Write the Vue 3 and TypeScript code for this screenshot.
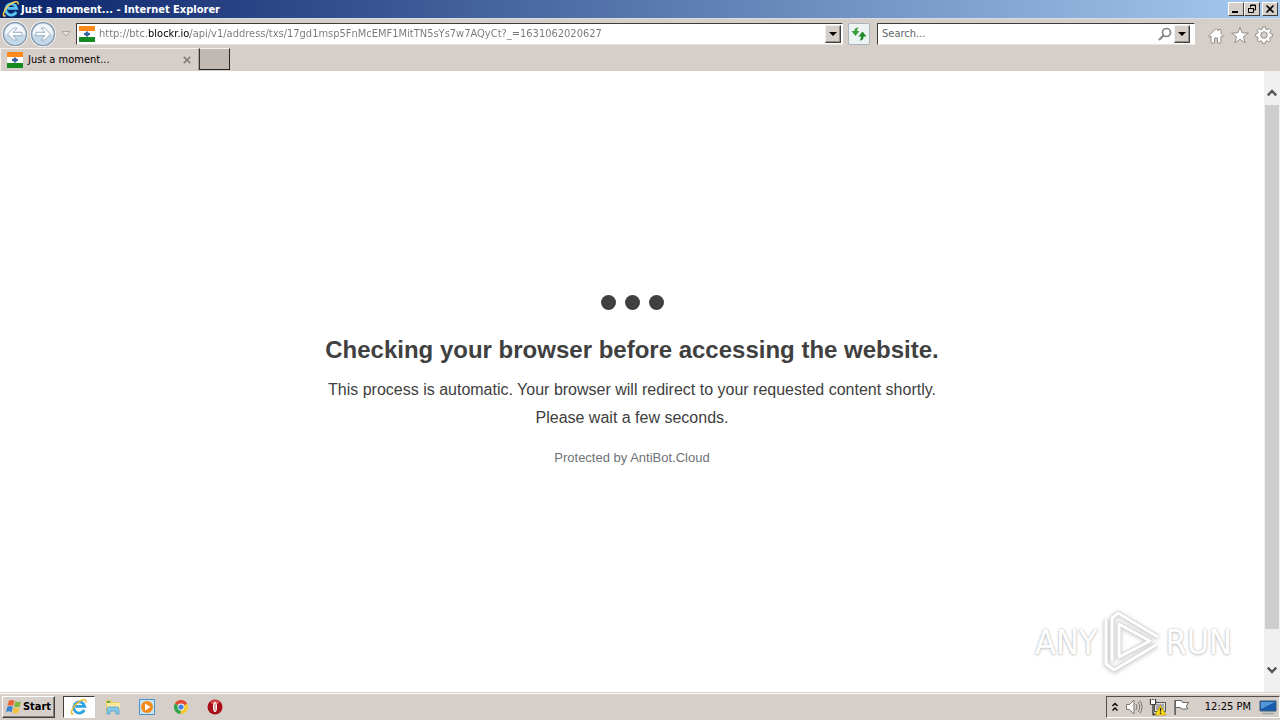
<script setup lang="ts">
import { ref } from 'vue'

const address = ref('http://btc.blockr.io/api/v1/address/txs/17gd1msp5FnMcEMF1MitTN5sYs7w7AQyCt?_=1631062020627')
const query = ref('')
</script>

<template>
  <div class="desktop">
    <header class="titlebar">
      <svg class="ie" viewBox="0 0 18 18" aria-hidden="true">
        <path d="M14.3 12a5.6 5.6 0 1 1 .5-3.6H5.5" fill="none" stroke="#5cc4f4" stroke-width="2.8" />
        <path d="M3.500 15.500C-.5 18 1.500 9.500 7 5.200 11.500 1.500 17 .2 16 4.500" fill="none" stroke="#f6d04e" stroke-width="1.500" />
      </svg>
      <span class="title">Just a moment... - Internet Explorer</span>
      <div class="winbtns">
        <button class="winbtn" aria-label="Minimize"><svg viewBox="0 0 12 10"><path d="M2 8h6" stroke="#000" stroke-width="2" /></svg></button>
        <button class="winbtn" aria-label="Restore"><svg viewBox="0 0 12 10"><path d="M4.500 3.500V1h5v5H8M4 1.500h6M2.500 4.500h5v4h-5zM2 4.500h6" fill="none" stroke="#000" /></svg></button>
        <button class="winbtn close" aria-label="Close"><svg viewBox="0 0 12 10"><path d="M2.500 1.500l7 7M9.500 1.500l-7 7" stroke="#000" stroke-width="1.600" /></svg></button>
      </div>
    </header>

    <nav class="navbar">
      <div class="history">
        <button class="round" aria-label="Back">
          <svg viewBox="0 0 26 26">
            <circle cx="13" cy="13" r="11.500" fill="#dce6ef" stroke="#8799ad" stroke-width="1.500" />
            <path d="M3 13a10 10 0 0 1 20 0z" fill="#f3f6fa" />
            <path d="M3 14a10 10 0 0 0 20 0z" fill="#c3d9ea" />
            <path d="M5.500 13l6-6h3.500l-4 4.300h9v3.400h-9l4 4.300h-3.500z" fill="#fff" stroke="#91a7bd" stroke-width=".9" />
          </svg>
        </button>
        <button class="round" aria-label="Forward">
          <svg viewBox="0 0 26 26">
            <circle cx="13" cy="13" r="11.500" fill="#dce6ef" stroke="#8799ad" stroke-width="1.500" />
            <path d="M3 13a10 10 0 0 1 20 0z" fill="#f3f6fa" />
            <path d="M3 14a10 10 0 0 0 20 0z" fill="#c3d9ea" />
            <path d="M20.500 13l-6-6H11l4 4.300H6v3.400h9L11 19h3.500z" fill="#fff" stroke="#91a7bd" stroke-width=".9" />
          </svg>
        </button>
      </div>
      <button class="plain recent" aria-label="Recent pages"><svg viewBox="0 0 10 6"><path d="M1 .5h8L5 5z" fill="#e8e5e0" stroke="#aaa6a0" /></svg></button>
      <div class="field address">
        <svg class="flag" viewBox="0 0 16 16" aria-hidden="true"><path fill="#ff8a1c" d="M0 0h16v5H0z" /><path fill="#fff" d="M0 5h16v6H0z" /><path fill="#168a20" d="M0 11h16v5H0z" /><path fill="#3d62a0" d="M8 5l3 3-3 3-3-3zM5 7h6v2H5z" /></svg>
        <input v-model="address" class="url" type="text" aria-label="Address" spellcheck="false">
        <button class="drop" aria-label="Show address list"><svg viewBox="0 0 8 4"><path d="M0 0h8L4 4z" /></svg></button>
      </div>
      <button class="refresh" aria-label="Refresh">
        <svg viewBox="0 0 16 16"><path d="M7.500 1.500Q3 1.500 3.500 5H.5l4 5 4-5H6Q5.800 3 7.500 1.500z" fill="#36a038" /><path d="M8.500 14.500q4.500 0 4-4h3l-4-5-4 5H10q.2 2.500-1.500 4z" fill="#208a28" /></svg>
      </button>
      <div class="field search">
        <input v-model="query" type="text" placeholder="Search..." aria-label="Search">
        <button class="plain glass" aria-label="Search the web"><svg viewBox="0 0 14 14"><circle cx="8.500" cy="5.500" r="4" fill="none" stroke="#858585" stroke-width="1.700" /><path d="M5.500 8.500L1 13" stroke="#858585" stroke-width="2.200" /></svg></button>
        <button class="drop" aria-label="Search options"><svg viewBox="0 0 8 4"><path d="M0 0h8L4 4z" /></svg></button>
      </div>
      <div class="tools">
        <button class="plain tool" aria-label="Home"><svg viewBox="0 0 18 18"><path d="M1.500 10L9 2.500l2.500 2.500V3.500h2.500v4l2.500 2.500-1 1-1.500-1v7h-3.500v-5h-3v5H4v-7l-1.500 1z" /></svg></button>
        <button class="plain tool" aria-label="Favorites"><svg viewBox="0 0 18 18"><path d="M9 1l2.100 5.800 6.200.2-4.900 3.800 1.800 6L9 13.300l-5.200 3.500 1.800-6L.7 7l6.200-.2z" /></svg></button>
        <button class="plain tool" aria-label="Tools"><svg viewBox="0 0 18 18"><path fill-rule="evenodd" d="M7.500 1h3l.4 2.200 1.300.6L14 2.400 16 4.500l-1.300 1.900.5 1.200 2.100.3v2.900l-2.100.4-.6 1.300L15.800 14l-2 2-1.800-1.200-1.300.5-.4 2h-3l-.4-2-1.200-.5L4 16l-2-2 1.200-1.600-.5-1.300L.7 10.700v-3l2-.4.6-1.200L2 4.500l2-2 1.800 1.300 1.300-.6zM9 5.700a3.300 3.300 0 1 0 0 6.600 3.300 3.300 0 0 0 0-6.600z" /></svg></button>
      </div>
    </nav>

    <div class="tabs">
      <div class="tab">
        <svg class="flag" viewBox="0 0 16 16" aria-hidden="true"><path fill="#ff8a1c" d="M0 0h16v5H0z" /><path fill="#fff" d="M0 5h16v6H0z" /><path fill="#168a20" d="M0 11h16v5H0z" /><path fill="#3d62a0" d="M8 5l3 3-3 3-3-3zM5 7h6v2H5z" /></svg>
        <span class="tabname">Just a moment...</span>
        <button class="plain tabclose" aria-label="Close tab"><svg viewBox="0 0 8 8"><path d="M.8.8l6.400 6.400M7.200.8L.8 7.200" stroke="#85817d" stroke-width="1.800" /></svg></button>
      </div>
      <button class="newtab" aria-label="New tab"></button>
    </div>

    <div class="viewport">
      <main class="page">
        <div class="dots"><i></i><i></i><i></i></div>
        <h1>Checking your browser before accessing the website.</h1>
        <p>This process is automatic. Your browser will redirect to your requested content shortly.</p>
        <p>Please wait a few seconds.</p>
        <small>Protected by <a href="#">AntiBot.Cloud</a></small>
      </main>
      <div class="scroll">
        <button class="plain arrow" aria-label="Scroll up"><svg viewBox="0 0 10 8"><path d="M.8 6.500L5 2l4.200 4.500" fill="none" stroke="#555" stroke-width="2.400" /></svg></button>
        <div class="track"><div class="thumb"></div></div>
        <button class="plain arrow" aria-label="Scroll down"><svg viewBox="0 0 10 8"><path d="M.8 1.500L5 6l4.200-4.500" fill="none" stroke="#555" stroke-width="2.400" /></svg></button>
      </div>
      <div class="watermark">
        <span>ANY</span>
        <svg viewBox="0 0 60 64" aria-hidden="true">
          <g fill="none" stroke="#d4d4d4" stroke-width="4.500" stroke-linejoin="round">
            <path d="M18 14v33l31-16z" /><path d="M11 51V8l6-5 40 24" /><path d="M5 9v45l8 6 42-25" />
          </g>
          <g fill="none" stroke="#fff" stroke-width="3" stroke-linejoin="round">
            <path d="M18 14v33l31-16z" /><path d="M11 51V8l6-5 40 24" /><path d="M5 9v45l8 6 42-25" />
          </g>
        </svg>
        <span>RUN</span>
      </div>
    </div>

    <footer class="taskbar">
      <button class="start">
        <svg viewBox="0 0 18 18" aria-hidden="true"><path d="M3 3q3-2 6 0L7.500 8.500q-3-1.800-6 0z" fill="#ed6438" /><path d="M10 3.500q3 1.500 6 0L14.500 9q-3 1.500-6 0z" fill="#82b840" /><path d="M1.300 9.500q3-1.800 6 0L5.800 15q-3-1.800-6 0z" fill="#3b83d0" /><path d="M8.300 10q3 1.500 6 0l-1.500 5.500q-3 1.500-6 0z" fill="#f5c23d" /></svg>
        <span>Start</span>
      </button>
      <div class="launch">
        <button class="task active" aria-label="Internet Explorer"><svg viewBox="0 0 18 18"><path d="M14.300 12a5.600 5.600 0 1 1 .5-3.600H5.500" fill="none" stroke="#2fa3df" stroke-width="2.800" /><path d="M3.500 15.500C-.5 18 1.500 9.500 7 5.200 11.500 1.500 17 .2 16 4.500" fill="none" stroke="#eebd35" stroke-width="1.500" /></svg></button>
        <button class="task" aria-label="Windows Explorer"><svg viewBox="0 0 18 18"><path d="M2 2h5l1 2h7v9H2z" fill="#e9c95b" /><path d="M3 3h3v2H3z" fill="#58a650" /><path d="M3 5h13v7H3z" fill="#f9e99e" /><path d="M3 16v-5q0-2 2-2h8q2 0 2 2v5h-3v-3H6v3z" fill="#83c7e9" stroke="#4b9bc7" stroke-width=".7" /></svg></button>
        <button class="task" aria-label="Media Player"><svg viewBox="0 0 18 18"><path d="M1.500 1.500h15v15h-15z" fill="#c9e4f6" stroke="#4b91c9" /><circle cx="9" cy="9" r="6" fill="#f58a18" /><path d="M7 5.500v7L12.500 9z" fill="#fff" /></svg></button>
        <button class="task" aria-label="Chrome"><svg viewBox="0 0 18 18"><circle cx="9" cy="9" r="7" fill="#f4ca30" /><path d="M9 9L2.900 5.500a7 7 0 0 1 12.200 0z" fill="#e34737" /><path d="M9 9L2.900 5.500A7 7 0 0 0 8.500 16z" fill="#30a354" /><circle cx="9" cy="9" r="3.400" fill="#fff" /><circle cx="9" cy="9" r="2.600" fill="#427fe0" /></svg></button>
        <button class="task" aria-label="Opera"><svg viewBox="0 0 18 18"><circle cx="9" cy="9" r="7.500" fill="#a80f18" /><path d="M4 4a7.500 7.500 0 0 1 10 0l-2 2H6z" fill="#d44b4b" /><ellipse cx="9" cy="9" rx="2" ry="5" fill="#fff" /><path d="M9 5.500v7" stroke="#b06060" /></svg></button>
      </div>
      <div class="tray">
        <button class="plain more" aria-label="Show hidden icons"><svg viewBox="0 0 8 10"><path d="M1.500 4L4 1.500 6.500 4M1.500 8.500L4 6l2.500 2.500" fill="none" stroke="#000" stroke-width="1.400" /></svg></button>
        <button class="plain" aria-label="Volume"><svg viewBox="0 0 18 18"><path d="M1.500 6.500h3L9 2v14l-4.500-4.500h-3z" fill="#fff" stroke="#777" /><path d="M11 6q2 3 0 6M13 4q3.500 5 0 10M15 2.500q4 6.500 0 13" fill="none" stroke="#777" /></svg></button>
        <button class="plain" aria-label="Network"><svg viewBox="0 0 18 18"><path d="M5.500 4.500h11v9h-11z" fill="#ddd" stroke="#555" /><path d="M7 6h8v6H7z" fill="#aaa" /><path d="M1.500 1v5h5V1M4 1v3M4 6v10.500h4" fill="none" stroke="#333" stroke-width="1.300" /><path d="M2 2h4v4H2z" fill="#fff" /><path d="M11.500 7.500L17 17H6z" fill="#ffdc18" stroke="#b69500" stroke-width=".7" /><path d="M11.500 10v3.500M11.500 14.500V16" stroke="#222" stroke-width="1.300" /></svg></button>
        <button class="plain" aria-label="Action Center"><svg viewBox="0 0 18 18"><path d="M2.500 17V2.500h6l1 2h6l-2 3.500 1 3h-6l-1-1.500h-5" fill="#fff" stroke="#666" /><path d="M2 2v15" stroke="#666" stroke-width="1.500" /></svg></button>
        <time>12:25 PM</time>
        <button class="plain" aria-label="Show desktop"><svg viewBox="0 0 18 18"><path d="M1 3h16v10H1z" fill="#175cae" stroke="#385a7b" /><path d="M2 4h14L2 11z" fill="#5797db" /><path d="M3 15.500h12" stroke="#9aa" stroke-width="1.500" /></svg></button>
      </div>
    </footer>
  </div>
</template>

<style>
body { margin: 0; }
</style>

<style scoped>
* { box-sizing: border-box; }
.desktop { display: flex; flex-direction: column; height: 100vh; overflow: hidden; background: #d6cec8; color: #000; font-family: "DejaVu Sans Condensed", "DejaVu Sans", sans-serif; font-size: 11px; }
button, input { font: inherit; color: inherit; border-radius: 0; padding: 0; margin: 0; }
button { display: flex; align-items: center; justify-content: center; flex: none; }
svg { display: block; flex: none; }
.plain { border: 0; background: none; }
.flag { width: 16px; height: 16px; }

.titlebar { flex: none; display: flex; align-items: center; height: 18px; padding: 0 2px; background: linear-gradient(to right, #0a246a, #a6caf0); color: #fff; }
.ie { width: 18px; height: 18px; }
.title { flex: 1; margin-left: 1px; font-weight: bold; }
.winbtns { display: flex; }
.winbtn { width: 16px; height: 14px; border: 1px solid; border-color: #fff #404040 #404040 #fff; background: #d6cec8; }
.winbtn svg { width: 12px; height: 10px; }
.close { margin-left: 2px; }

.navbar { flex: none; display: flex; align-items: center; height: 30px; padding: 0 7px 0 2px; border-top: 1px solid #d4dce4; }
.history { display: flex; gap: 2px; }
.round { width: 26px; height: 26px; border: 0; border-radius: 50%; background: #fff; }
.round svg { width: 26px; height: 26px; }
.recent { width: 20px; height: 20px; }
.recent svg { width: 10px; height: 6px; }
.field { display: flex; align-items: center; height: 22px; padding: 1px; background: #fff; border: 1px solid; border-color: #403c38 #fff #e8e4e0 #403c38; }
.field input { flex: 1; min-width: 0; height: 18px; border: 0; outline: 0; background: none; }
.address { flex: 762 1 0; padding-left: 2px; gap: 4px; }
.address .url { background: linear-gradient(to right, #777 49px, #000 49px, #000 91px, #777 91px); background-clip: text; -webkit-background-clip: text; color: transparent; caret-color: #000; }
.drop { width: 16px; height: 18px; border: 1px solid; border-color: #eee #404040 #404040 #eee; box-shadow: inset -1px -1px #969088; background: #d6cec8; }
.drop svg { width: 8px; height: 4px; }
.refresh { width: 22px; height: 22px; margin: 0 7px 0 5px; border: 1px solid #aab4bc; border-radius: 2px; background: #edf3f3; }
.refresh svg { width: 16px; height: 16px; }
.search { flex: 308 1 0; padding: 1px 4px 1px 4px; }
.search input::placeholder { color: #666; opacity: 1; }
.glass { width: 18px; height: 18px; }
.glass svg { width: 14px; height: 14px; }
.tools { display: flex; gap: 6px; margin: 2px 0 0 12px; }
.tool svg { width: 18px; height: 18px; fill: #fff; stroke: #928e8a; stroke-width: 1; }

.tabs { flex: none; display: flex; height: 23px; }
.tab { display: flex; align-items: center; width: 199px; padding: 0 6px; gap: 5px; border: 1px solid; border-color: #f4f0ec #a8a098 transparent #f4f0ec; }
.tabname { flex: 1; }
.tabclose { width: 10px; height: 16px; }
.tabclose svg { width: 8px; height: 8px; }
.newtab { width: 31px; height: 22px; border: 1px solid; border-color: #f4f0ec #222 #222 #333; background: #bfb8b3; }

.viewport { position: relative; flex: 1; min-height: 0; display: flex; background: #fff; }
.page { flex: 1; display: flex; flex-direction: column; align-items: center; justify-content: center; font-family: "Liberation Sans", Arial, sans-serif; color: #404040; text-align: center; }
.dots { display: flex; gap: 9px; margin-bottom: 24px; }
.dots i { width: 15px; height: 15px; border-radius: 50%; background: #404040; }
h1 { margin: 0 0 10px; font-size: 24px; line-height: 32px; font-weight: bold; }
p { margin: 0; font-size: 16px; line-height: 28px; }
small { margin-top: 16px; font-size: 13px; line-height: 20px; color: #6f7379; }
small a { color: inherit; text-decoration: none; }
.scroll { width: 16px; display: flex; flex-direction: column; background: #f0f0f0; padding: 14px 1px; }
.arrow { width: 14px; height: 16px; }
.arrow svg { width: 10px; height: 8px; }
.track { flex: 1; padding-top: 4px; }
.thumb { height: 94%; background: #cdcdcd; }
.watermark { position: absolute; right: 48px; bottom: 18px; display: flex; align-items: center; gap: 4px; font-size: 34px; line-height: 64px; color: #fff; text-shadow: 0 0 2px #b8b8b8, 0 1px 3px #ccc; pointer-events: none; }
.watermark svg { width: 60px; height: 64px; filter: drop-shadow(0 1px 2px #ccc); }

.taskbar { flex: none; display: flex; align-items: center; height: 28px; padding: 0 0 0 2px; border-top: 1px solid #d6cec8; box-shadow: inset 0 1px #fff; }
.start { height: 22px; width: 53px; border: 1px solid; border-color: #fff #404040 #404040 #fff; box-shadow: inset -1px -1px #888078; background: #d6cec8; font-weight: bold; }
.start svg { width: 17px; height: 17px; }
.launch { flex: 1; display: flex; gap: 2px; margin-left: 8px; }
.task { width: 32px; height: 22px; border: 1px solid transparent; background: none; }
.task svg { width: 18px; height: 18px; }
.active { background: #fff; border-color: #404040 #fff #fff #404040; }
.tray { display: flex; align-items: center; height: 22px; gap: 6px; padding: 0 2px 0 4px; border: 1px solid; border-color: #55504c #fff #fff #55504c; }
.tray svg { width: 18px; height: 18px; }
.tray .more svg { width: 8px; height: 10px; }
.tray time { margin: 0 2px 0 8px; }
</style>
